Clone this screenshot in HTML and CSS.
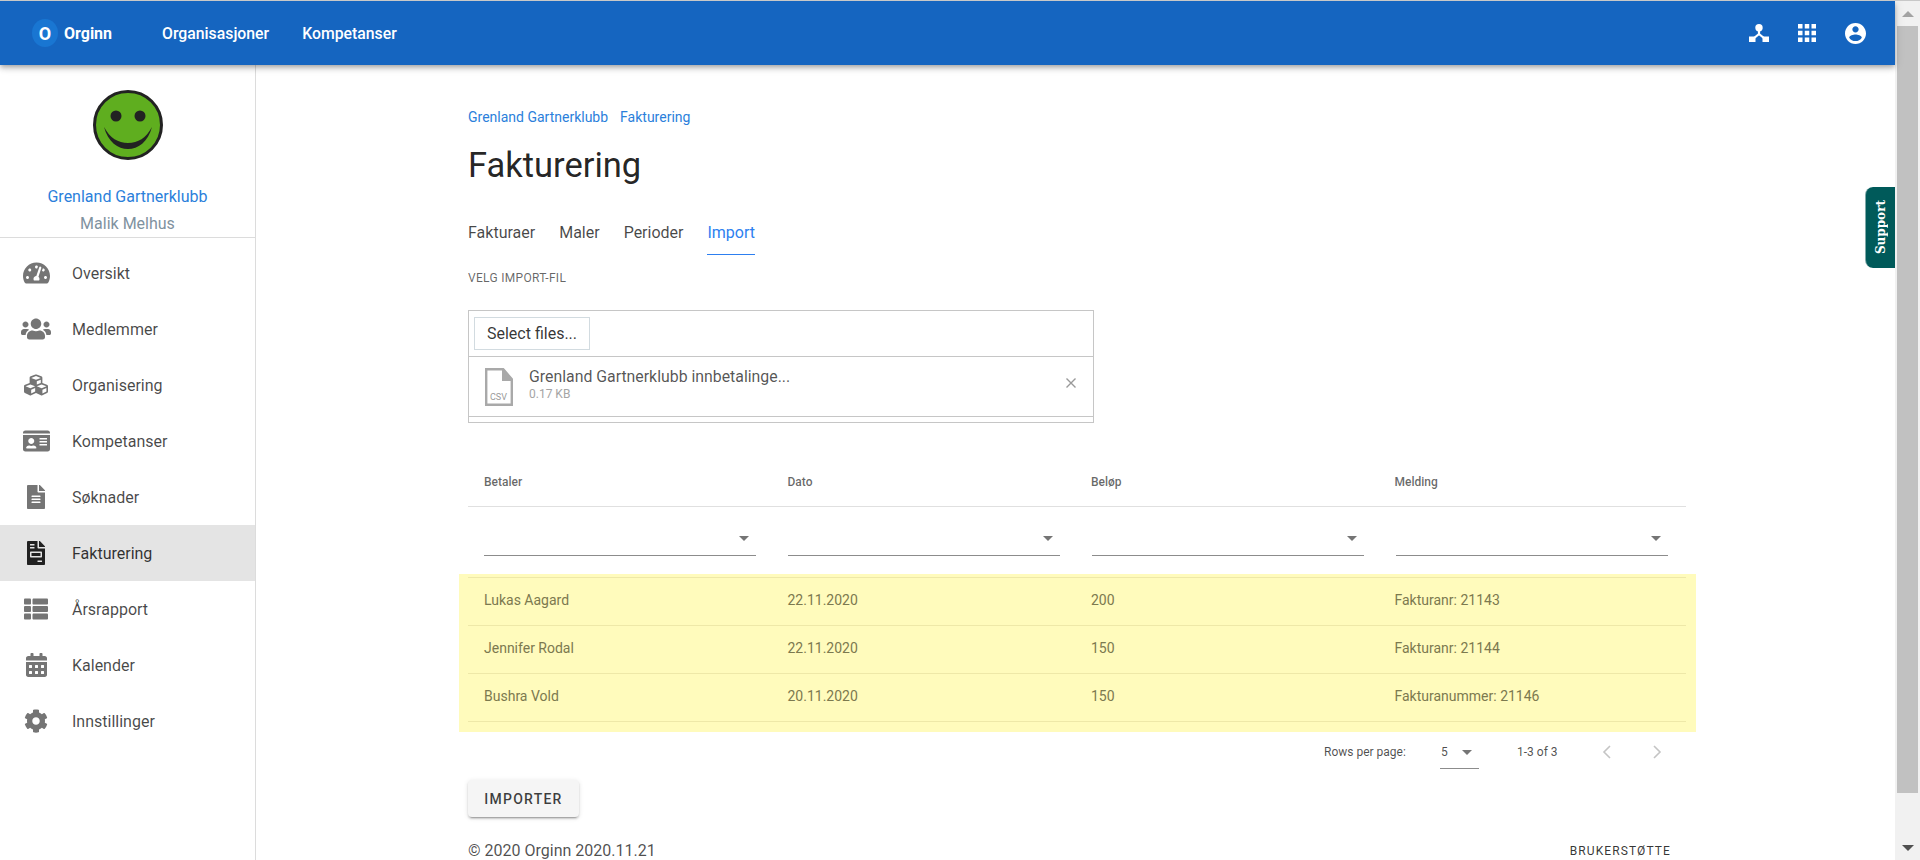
FILE: index.html
```html
<!DOCTYPE html>
<html lang="no">
<head>
<meta charset="utf-8">
<title>Fakturering</title>
<link rel="stylesheet" href="styles.css">
</head>
<body>
<div class="page">
  <div class="app">
    <header class="appbar">
      <div class="brand"><span class="brand-mark">O</span><span class="brand-name">Orginn</span></div>
      <nav class="topnav"><a>Organisasjoner</a><a>Kompetanser</a></nav>
      <div class="top-icons">
        <svg class="ic-hub" viewBox="0 0 20 18"><circle cx="10" cy="3.800" r="3.700"/><path d="M0 12.500h6.500V18H0zM13.500 12.500H20V18h-6.500z"/><path d="M10 6v4L4.500 14.500M10 10l5.500 4.500" fill="none" stroke="#fff" stroke-width="2.200"/></svg>
        <svg class="ic-apps" viewBox="4 4 16 16"><path d="M4 8h4V4H4v4zm6 12h4v-4h-4v4zm-6 0h4v-4H4v4zm0-6h4v-4H4v4zm6 0h4v-4h-4v4zm6-10v4h4V4h-4zm-6 4h4V4h-4v4zm6 6h4v-4h-4v4zm0 6h4v-4h-4v4z"/></svg>
        <svg class="ic-account" viewBox="2 2 20 20"><path d="M12 2C6.48 2 2 6.48 2 12s4.48 10 10 10 10-4.48 10-10S17.52 2 12 2zm0 3c1.66 0 3 1.34 3 3s-1.34 3-3 3-3-1.34-3-3 1.34-3 3-3zm0 14.200c-2.500 0-4.710-1.280-6-3.220.030-1.990 4-3.080 6-3.080 1.990 0 5.970 1.090 6 3.080-1.290 1.940-3.500 3.220-6 3.220z"/></svg>
      </div>
    </header>
    <div class="body">
      <aside class="sidebar">
        <div class="profile">
          <svg class="smiley" viewBox="0 0 70 70"><circle cx="35" cy="35" r="33.5" fill="#5fae1f" stroke="#222" stroke-width="3"/><circle cx="23" cy="26" r="5.5" fill="#222"/><circle cx="47" cy="26" r="5.5" fill="#222"/><path d="M11 37c4 15 14 22 24 22s20-7 24-22c-6 11-14 16-24 16s-18-5-24-16z" fill="#222"/></svg>
          <div class="org-name">Grenland Gartnerklubb</div>
          <div class="user-name">Malik Melhus</div>
        </div>
        <nav class="menu">
          <a class="menu-item"><span class="menu-icon"><svg viewBox="0 0 576 512"><path d="M288 32C128.94 32 0 160.94 0 320c0 52.8 14.25 102.26 39.06 144.8 5.61 9.62 16.3 15.2 27.44 15.2h443c11.14 0 21.83-5.58 27.44-15.2C561.75 422.26 576 372.8 576 320c0-159.06-128.94-288-288-288zm0 64c14.71 0 26.58 10.13 30.32 23.65-1.11 2.26-2.64 4.23-3.45 6.67l-9.22 27.67c-5.13 3.49-10.97 6.01-17.64 6.01-17.67 0-32-14.33-32-32S270.33 96 288 96zM96 384c-17.67 0-32-14.33-32-32s14.33-32 32-32 32 14.33 32 32-14.33 32-32 32zm48-160c-17.67 0-32-14.33-32-32s14.33-32 32-32 32 14.33 32 32-14.33 32-32 32zm246.77-72.41l-61.33 184C343.13 347.33 352 364.54 352 384c0 11.72-3.38 22.55-8.88 32H232.88c-5.5-9.45-8.88-20.28-8.88-32 0-33.94 26.5-61.43 59.9-63.59l61.34-184.01c4.17-12.56 17.73-19.45 30.36-15.17 12.57 4.19 19.35 17.79 15.17 30.36zm14.66 57.2l15.52-46.55c3.47-1.29 7.13-2.23 11.05-2.23 17.67 0 32 14.33 32 32s-14.33 32-32 32c-11.38-.01-20.89-6.28-26.57-15.22zM480 384c-17.67 0-32-14.33-32-32s14.33-32 32-32 32 14.33 32 32-14.33 32-32 32z"/></svg></span>Oversikt</a>
          <a class="menu-item"><span class="menu-icon"><svg viewBox="0 0 640 512"><path d="M96 224c35.3 0 64-28.7 64-64s-28.7-64-64-64-64 28.7-64 64 28.7 64 64 64zm448 0c35.3 0 64-28.7 64-64s-28.7-64-64-64-64 28.7-64 64 28.7 64 64 64zm32 32h-64c-17.6 0-33.5 7.1-45.1 18.6 40.3 22.1 68.9 62 75.1 109.4h66c17.7 0 32-14.3 32-32v-32c0-35.3-28.7-64-64-64zm-256 0c61.9 0 112-50.1 112-112S381.9 32 320 32 208 82.1 208 144s50.1 112 112 112zm76.8 32h-8.3c-20.8 10-43.9 16-68.5 16s-47.6-6-68.5-16h-8.3C179.6 288 128 339.6 128 403.2V432c0 26.5 21.5 48 48 48h288c26.5 0 48-21.5 48-48v-28.8c0-63.6-51.6-115.2-115.2-115.2zm-223.7-13.4C161.5 263.1 145.6 256 128 256H64c-35.3 0-64 28.7-64 64v32c0 17.7 14.3 32 32 32h65.9c6.3-47.4 34.9-87.3 75.2-109.4z"/></svg></span>Medlemmer</a>
          <a class="menu-item"><span class="menu-icon"><svg viewBox="0 0 512 512"><path d="M488.6 250.2L392 214V105.5c0-15-9.3-28.4-23.4-33.7l-100-37.5c-8.1-3.1-17.1-3.1-25.3 0l-100 37.5c-14.1 5.3-23.4 18.7-23.4 33.7V214l-96.6 36.2C9.3 255.5 0 268.9 0 283.9V394c0 13.6 7.7 26.1 19.9 32.2l100 50c10.1 5.1 22.1 5.1 32.2 0l103.9-52 103.9 52c10.1 5.1 22.1 5.1 32.2 0l100-50c12.2-6.1 19.9-18.6 19.9-32.2V283.9c0-15-9.3-28.4-23.4-33.7zM358 214.8l-85 31.9v-68.2l85-37v73.3zM154 104.1l102-38.2 102 38.2v.6l-102 41.4-102-41.4v-.6zm84 291.1l-85 42.5v-79.1l85-38.8v75.4zm0-112l-102 41.4-102-41.4v-.6l102-38.2 102 38.2v.6zm240 112l-85 42.5v-79.1l85-38.8v75.4zm0-112l-102 41.4-102-41.4v-.6l102-38.2 102 38.2v.6z"/></svg></span>Organisering</a>
          <a class="menu-item"><span class="menu-icon"><svg viewBox="0 0 576 512"><path d="M528 32H48C21.5 32 0 53.5 0 80v16h576V80c0-26.5-21.5-48-48-48zM0 432c0 26.5 21.5 48 48 48h480c26.5 0 48-21.5 48-48V128H0v304zm352-232c0-4.4 3.6-8 8-8h144c4.4 0 8 3.6 8 8v16c0 4.4-3.6 8-8 8H360c-4.4 0-8-3.6-8-8v-16zm0 64c0-4.4 3.6-8 8-8h144c4.4 0 8 3.6 8 8v16c0 4.4-3.6 8-8 8H360c-4.4 0-8-3.6-8-8v-16zm0 64c0-4.4 3.6-8 8-8h144c4.4 0 8 3.6 8 8v16c0 4.4-3.6 8-8 8H360c-4.4 0-8-3.6-8-8v-16zM176 192c35.3 0 64 28.7 64 64s-28.7 64-64 64-64-28.7-64-64 28.7-64 64-64zM67.1 396.2C75.5 370.5 99.6 352 128 352h8.2c12.3 5.1 25.7 8 39.8 8s27.6-2.9 39.8-8h8.2c28.4 0 52.5 18.5 60.9 44.2 3.2 9.9-5.2 19.8-15.6 19.8H82.7c-10.4 0-18.8-10-15.6-19.8z"/></svg></span>Kompetanser</a>
          <a class="menu-item"><span class="menu-icon"><svg viewBox="0 0 384 512"><path d="M224 136V0H24C10.7 0 0 10.7 0 24v464c0 13.3 10.7 24 24 24h336c13.3 0 24-10.7 24-24V160H248c-13.2 0-24-10.8-24-24zm64 236c0 6.6-5.4 12-12 12H108c-6.6 0-12-5.4-12-12v-8c0-6.6 5.4-12 12-12h168c6.6 0 12 5.4 12 12v8zm0-64c0 6.6-5.4 12-12 12H108c-6.6 0-12-5.4-12-12v-8c0-6.6 5.4-12 12-12h168c6.6 0 12 5.4 12 12v8zm0-72v8c0 6.6-5.4 12-12 12H108c-6.6 0-12-5.4-12-12v-8c0-6.6 5.4-12 12-12h168c6.6 0 12 5.4 12 12zm96-114.1v6.1H256V0h6.1c6.4 0 12.5 2.5 17 7l97.9 98c4.5 4.5 7 10.6 7 16.9z"/></svg></span>Søknader</a>
          <a class="menu-item active"><span class="menu-icon"><svg viewBox="0 0 384 512"><path d="M288 256H96v64h192v-64zm89-151L279.1 7c-4.5-4.5-10.6-7-17-7H256v128h128v-6.1c0-6.3-2.5-12.4-7-16.9zm-153 31V0H24C10.7 0 0 10.7 0 24v464c0 13.3 10.7 24 24 24h336c13.3 0 24-10.7 24-24V160H248c-13.2 0-24-10.8-24-24zM64 72c0-4.42 3.58-8 8-8h80c4.42 0 8 3.58 8 8v16c0 4.42-3.58 8-8 8H72c-4.42 0-8-3.58-8-8V72zm0 64c0-4.42 3.58-8 8-8h80c4.42 0 8 3.58 8 8v16c0 4.42-3.58 8-8 8H72c-4.42 0-8-3.58-8-8v-16zm256 304c0 4.42-3.58 8-8 8h-80c-4.42 0-8-3.58-8-8v-16c0-4.42 3.58-8 8-8h80c4.42 0 8 3.58 8 8v16zm0-200v96c0 8.84-7.16 16-16 16H80c-8.84 0-16-7.16-16-16v-96c0-8.84 7.16-16 16-16h224c8.84 0 16 7.16 16 16z"/></svg></span>Fakturering</a>
          <a class="menu-item"><span class="menu-icon"><svg viewBox="0 0 512 512"><path d="M149.333 216v80c0 13.255-10.745 24-24 24H24c-13.255 0-24-10.745-24-24v-80c0-13.255 10.745-24 24-24h101.333c13.255 0 24 10.745 24 24zM0 376v80c0 13.255 10.745 24 24 24h101.333c13.255 0 24-10.745 24-24v-80c0-13.255-10.745-24-24-24H24c-13.255 0-24 10.745-24 24zM125.333 32H24C10.745 32 0 42.745 0 56v80c0 13.255 10.745 24 24 24h101.333c13.255 0 24-10.745 24-24V56c0-13.255-10.745-24-24-24zm80 448H488c13.255 0 24-10.745 24-24v-80c0-13.255-10.745-24-24-24H205.333c-13.255 0-24 10.745-24 24v80c0 13.255 10.745 24 24 24zm-24-424v80c0 13.255 10.745 24 24 24H488c13.255 0 24-10.745 24-24V56c0-13.255-10.745-24-24-24H205.333c-13.255 0-24 10.745-24 24zm24 264H488c13.255 0 24-10.745 24-24v-80c0-13.255-10.745-24-24-24H205.333c-13.255 0-24 10.745-24 24v80c0 13.255 10.745 24 24 24z"/></svg></span>Årsrapport</a>
          <a class="menu-item"><span class="menu-icon"><svg viewBox="0 0 448 512"><path d="M0 464c0 26.5 21.5 48 48 48h352c26.5 0 48-21.5 48-48V192H0v272zm320-196c0-6.6 5.4-12 12-12h40c6.6 0 12 5.4 12 12v40c0 6.6-5.4 12-12 12h-40c-6.6 0-12-5.4-12-12v-40zm0 128c0-6.6 5.4-12 12-12h40c6.6 0 12 5.4 12 12v40c0 6.6-5.4 12-12 12h-40c-6.6 0-12-5.4-12-12v-40zM192 268c0-6.6 5.4-12 12-12h40c6.6 0 12 5.4 12 12v40c0 6.6-5.4 12-12 12h-40c-6.6 0-12-5.4-12-12v-40zm0 128c0-6.6 5.4-12 12-12h40c6.6 0 12 5.4 12 12v40c0 6.6-5.4 12-12 12h-40c-6.6 0-12-5.4-12-12v-40zM64 268c0-6.6 5.4-12 12-12h40c6.6 0 12 5.4 12 12v40c0 6.6-5.4 12-12 12H76c-6.6 0-12-5.4-12-12v-40zm0 128c0-6.6 5.4-12 12-12h40c6.6 0 12 5.4 12 12v40c0 6.6-5.4 12-12 12H76c-6.6 0-12-5.4-12-12v-40zM400 64h-48V16c0-8.8-7.2-16-16-16h-32c-8.8 0-16 7.2-16 16v48H160V16c0-8.8-7.2-16-16-16h-32c-8.8 0-16 7.2-16 16v48H48C21.5 64 0 85.5 0 112v48h448v-48c0-26.5-21.5-48-48-48z"/></svg></span>Kalender</a>
          <a class="menu-item"><span class="menu-icon"><svg viewBox="0 0 512 512"><path d="M487.4 315.7l-42.6-24.6c4.3-23.2 4.3-47 0-70.2l42.6-24.6c4.9-2.8 7.1-8.6 5.5-14-11.1-35.6-30-67.8-54.7-94.6-3.8-4.1-10-5.1-14.8-2.3L380.8 110c-17.9-15.4-38.5-27.3-60.8-35.1V25.8c0-5.6-3.9-10.5-9.4-11.7-36.7-8.2-74.3-7.8-109.2 0-5.5 1.2-9.4 6.1-9.4 11.7V75c-22.2 7.9-42.8 19.8-60.8 35.1L88.7 85.5c-4.9-2.8-11-1.9-14.8 2.3-24.7 26.7-43.6 58.9-54.7 94.6-1.7 5.4.6 11.2 5.5 14L67.3 221c-4.3 23.2-4.3 47 0 70.2l-42.6 24.6c-4.9 2.8-7.1 8.6-5.5 14 11.1 35.6 30 67.8 54.7 94.6 3.8 4.1 10 5.1 14.8 2.3l42.6-24.6c17.9 15.4 38.5 27.3 60.8 35.1v49.2c0 5.6 3.9 10.5 9.4 11.7 36.7 8.2 74.3 7.8 109.2 0 5.5-1.2 9.4-6.1 9.4-11.7v-49.2c22.2-7.9 42.8-19.8 60.8-35.1l42.6 24.6c4.9 2.8 11 1.9 14.8-2.3 24.7-26.7 43.6-58.9 54.7-94.6 1.5-5.5-.7-11.3-5.6-14.1zM256 336c-44.1 0-80-35.9-80-80s35.9-80 80-80 80 35.9 80 80-35.9 80-80 80z"/></svg></span>Innstillinger</a>
        </nav>
      </aside>
      <main class="main">
        <div class="crumbs"><a>Grenland Gartnerklubb</a><a>Fakturering</a></div>
        <h1 class="title">Fakturering</h1>
        <div class="tabs"><a class="tab">Fakturaer</a><a class="tab">Maler</a><a class="tab">Perioder</a><a class="tab current">Import</a></div>
        <div class="field-label">VELG IMPORT-FIL</div>
        <div class="upload">
          <div class="upload-head"><button class="select-btn">Select files...</button></div>
          <div class="upload-file">
            <svg class="file-icon" viewBox="0 0 28 38"><path d="M1.2 1.2h17l8.6 10v25.6H1.2z" fill="#fff" stroke="#a9a9a9" stroke-width="2.4"/><path d="M17 1h2l8 10v2H17z" fill="#a9a9a9"/></svg>
            <span class="csv-tag">CSV</span>
            <div class="file-info"><div class="file-name">Grenland Gartnerklubb innbetalinge...</div><div class="file-size">0.17 KB</div></div>
            <svg class="file-remove" viewBox="0 0 12 12"><path d="M1.5 1.5l9 9M10.500 1.5l-9 9" stroke="#999" stroke-width="1.4" fill="none"/></svg>
          </div>
          <div class="upload-foot"></div>
        </div>
        <div class="grid">
          <div class="grid-head"><div>Betaler</div><div>Dato</div><div>Beløp</div><div>Melding</div></div>
          <div class="grid-filters">
            <div class="filter"><i class="caret"></i></div>
            <div class="filter"><i class="caret"></i></div>
            <div class="filter"><i class="caret"></i></div>
            <div class="filter"><i class="caret"></i></div>
          </div>
          <div class="preview">
            <div class="row"><div>Lukas Aagard</div><div>22.11.2020</div><div>200</div><div>Fakturanr: 21143</div></div>
            <div class="row"><div>Jennifer Rodal</div><div>22.11.2020</div><div>150</div><div>Fakturanr: 21144</div></div>
            <div class="row"><div>Bushra Vold</div><div>20.11.2020</div><div>150</div><div>Fakturanummer: 21146</div></div>
          </div>
          <div class="pager">
            <span class="rows-label">Rows per page:</span>
            <span class="rows-select"><span>5</span><i class="caret"></i></span>
            <span class="range">1-3 of 3</span>
            <svg class="chev" viewBox="0 0 10 16"><path d="M8 2L2 8l6 6" fill="none" stroke="#c4c4c4" stroke-width="1.600"/></svg>
            <svg class="chev next" viewBox="0 0 10 16"><path d="M2 2l6 6-6 6" fill="none" stroke="#c4c4c4" stroke-width="1.600"/></svg>
          </div>
        </div>
        <button class="import-btn">IMPORTER</button>
        <footer class="foot"><span class="copy">© 2020 Orginn 2020.11.21</span><a class="support-link">BRUKERSTØTTE</a></footer>
      </main>
    </div>
    <div class="support-tab"><span>Support</span></div>
  </div>
  <div class="scrollbar">
    <div class="sb-btn"><i class="sb-up"></i></div>
    <div class="sb-track"><div class="sb-thumb"></div></div>
    <div class="sb-btn"><i class="sb-down"></i></div>
  </div>
</div>
</body>
</html>
```
FILE: styles.css
```css
* { box-sizing: border-box; }
html, body { margin: 0; height: 100%; overflow: hidden; }
body { font-family: Roboto, "Liberation Sans", sans-serif; color: rgba(0,0,0,.87); background: #fff; }
a { color: inherit; text-decoration: none; }

.page { display: flex; height: 860px; border-top: 1px solid #c8c8c8; overflow: hidden; }
.app { position: relative; flex: 1; min-width: 0; display: flex; flex-direction: column; }

/* App bar */
.appbar { position: relative; z-index: 2; height: 64px; flex: none; display: flex; align-items: center; background: #1565c0; color: #fff; padding: 0 29px 0 32px; box-shadow: 0 2px 4px -1px rgba(0,0,0,.2), 0 4px 5px 0 rgba(0,0,0,.14), 0 1px 10px 0 rgba(0,0,0,.12); }
.brand { display: flex; align-items: center; width: 130px; }
.brand-mark { width: 26px; height: 28px; border-radius: 50%; background: #1976d2; display: flex; align-items: center; justify-content: center; font-size: 18px; font-weight: 700; margin-right: 6px; }
.brand-name { font-size: 16px; font-weight: 700; }
.topnav { display: flex; gap: 33px; font-size: 15.8px; font-weight: 500; }
.top-icons { margin-left: auto; display: flex; align-items: center; fill: #fff; }
.ic-hub { width: 20px; height: 18px; margin-right: 29px; }
.ic-apps { width: 18px; height: 18px; margin-right: 29px; }
.ic-account { width: 21px; height: 21px; }

/* Sidebar */
.body { flex: 1; min-height: 0; display: flex; }
.sidebar { width: 256px; flex: none; border-right: 1px solid #dcdcdc; }
.profile { height: 173px; padding-top: 25px; border-bottom: 1px solid #dcdcdc; text-align: center; }
.smiley { display: block; width: 70px; height: 70px; margin: 0 auto 27px; }
.org-name { font-size: 16px; line-height: 20px; color: #2b7fdb; }
.user-name { font-size: 16px; line-height: 20px; margin-top: 7px; color: #7f929f; }
.menu { padding-top: 7px; }
.menu-item { height: 56px; display: flex; align-items: center; font-size: 16px; color: rgba(0,0,0,.72); }
.menu-item.active { background: #e4e4e4; color: rgba(0,0,0,.8); }
.menu-icon { width: 72px; height: 24px; flex: none; display: flex; justify-content: center; fill: #757575; }
.menu-icon svg { height: 24px; display: block; }
.active .menu-icon { fill: #212121; }

/* Main */
.main { flex: 1; min-width: 0; padding: 42px 209px 0 212px; }
.crumbs { display: flex; gap: 12px; font-size: 14px; line-height: 20px; color: #2b7fdb; }
.title { margin: 14px 0 0; font-size: 34.5px; font-weight: 400; line-height: 48px; }
.tabs { display: flex; gap: 24px; margin-top: 26px; font-size: 16px; }
.tab { padding: 8px 0 11px; line-height: 20px; color: rgba(0,0,0,.72); border-bottom: 1px solid transparent; }
.tab.current { color: #2d7ff0; border-bottom-color: #2d7ff0; }
.field-label { margin-top: 15px; font-size: 12px; line-height: 16px; letter-spacing: .3px; color: rgba(0,0,0,.6); }

/* Upload */
.upload { width: 626px; margin-top: 24px; border: 1px solid #c6c6c6; }
.upload-head { height: 46px; padding: 6px 5px; border-bottom: 1px solid #c6c6c6; }
.select-btn { display: block; width: 116px; height: 33px; padding: 0; border: 1px solid #d2dbe0; background: #fff; font: 400 16px/1 Roboto, sans-serif; color: rgba(0,0,0,.8); }
.upload-file { position: relative; height: 60px; display: flex; padding: 11px 16px 0; border-bottom: 1px solid #c6c6c6; }
.file-icon { width: 28px; height: 38px; flex: none; }
.csv-tag { position: absolute; left: 21px; top: 35px; font-size: 9px; color: #999; }
.file-info { margin-left: 16px; }
.file-name { font-size: 15.85px; line-height: 18px; color: rgba(0,0,0,.68); }
.file-size { font-size: 12px; line-height: 16px; color: #a5a5a5; }
.file-remove { width: 12px; height: 12px; margin: 9px 0 0 auto; }
.upload-foot { height: 5px; }

/* Table */
.grid { margin-top: 35px; }
.grid-head, .row { display: grid; grid-template-columns: repeat(4, 303.5px); }
.grid-filters { display: grid; grid-template-columns: repeat(4, 304px); height: 67px; }
.grid-head { height: 49px; align-items: center; border-bottom: 1px solid #e0e0e0; font-size: 12px; font-weight: 500; color: rgba(0,0,0,.6); }
.grid-head > div, .row > div { padding: 0 16px; }
.filter { position: relative; margin: 0 16px; height: 49px; border-bottom: 1px solid #8c8c8c; }
.caret { display: block; width: 0; height: 0; border: 5px solid transparent; border-top-color: #757575; border-bottom-width: 0; }
.filter .caret { position: absolute; right: 7px; top: 29px; }
.preview { margin: 0 -10px 0 -9px; padding: 3px 10px 10px 9px; background: #fffbbc; }
.row { height: 48px; padding-bottom: 3px; align-items: center; border-top: 1px solid #eee8a8; font-size: 14px; color: #7c794f; }
.row:last-child { border-bottom: 1px solid #eee8a8; height: 49px; }
.pager { display: flex; align-items: center; height: 40px; padding-left: 856px; font-size: 12px; color: rgba(0,0,0,.7); }
.rows-label { width: 116px; }
.rows-select { position: relative; width: 39px; height: 32px; display: flex; align-items: center; padding-left: 1px; margin-top: 1px; margin-bottom: -1px; border-bottom: 1px solid #8c8c8c; }
.rows-select span { margin-top: -1px; }
.rows-select .caret { margin: -1px 0 0 14px; }
.range { margin-left: 38px; width: 85px; }
.chev { width: 10px; height: 16px; }
.next { margin-left: 40px; }
.import-btn { display: block; width: 111px; height: 37px; margin-top: 8px; padding: 0; border: 0; border-radius: 4px; background: #f5f5f5; box-shadow: 0 3px 1px -2px rgba(0,0,0,.2), 0 2px 2px 0 rgba(0,0,0,.14), 0 1px 5px 0 rgba(0,0,0,.12); font: 500 14px/1 Roboto, sans-serif; letter-spacing: 1.25px; color: rgba(0,0,0,.75); }
.foot { display: flex; justify-content: space-between; align-items: center; height: 18px; margin-top: 25px; padding-right: 15px; line-height: 18px; }
.copy { font-size: 16px; color: rgba(0,0,0,.7); }
.support-link { font-size: 12px; letter-spacing: 1.1px; color: rgba(0,0,0,.8); }

/* Support tab */
.support-tab { position: absolute; right: 0; top: 186px; width: 30px; height: 81px; display: flex; align-items: center; justify-content: center; background: #005a5a; border-left: 1px solid #7fa9a9; border-radius: 8px 0 0 8px; }
.support-tab span { writing-mode: vertical-rl; transform: rotate(180deg); font: 700 12px "DejaVu Serif", "Liberation Serif", serif; color: #fff; }

/* Scrollbar */
.scrollbar { width: 25px; flex: none; display: flex; flex-direction: column; background: #f1f1f1; }
.sb-btn { height: 25px; flex: none; display: flex; align-items: center; justify-content: center; }
.sb-up, .sb-down { width: 0; height: 0; border: 6px solid transparent; }
.sb-up { border-top-width: 0; border-bottom: 6px solid #a3a3a3; }
.sb-down { border-bottom-width: 0; border-top: 6px solid #505050; }
.sb-track { flex: 1; padding: 0 2px; }
.sb-thumb { height: 767px; background: #c1c1c1; }
```
